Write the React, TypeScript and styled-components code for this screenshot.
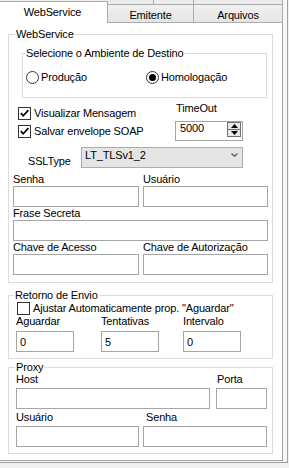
import React from "react";
import styled, { createGlobalStyle } from "styled-components";

const GlobalStyle = createGlobalStyle`
  * { box-sizing: border-box; }
  html, body { margin: 0; padding: 0; background: #f0f0f0; }
  body {
    font-family: "Liberation Sans", Arial, sans-serif;
    font-size: 11px;
    line-height: 13px;
    letter-spacing: -0.15px;
    color: #000;
  }
`;

const Frame = styled.div`
  width: 288px;
  padding-bottom: 1px;
  background: #f7f7f7;
  border-right: 1px solid #a0a0a0;
  border-bottom: 1px solid #a0a0a0;
`;

const TabStrip = styled.div`
  display: grid;
  width: 283px;
  grid-template-columns: 108px 46px 40px 89px;
  grid-template-rows: 4px 19px;
  background: #f0f0f0;
`;

const UpperTab = styled.div<{ $col: number }>`
  grid-row: 1;
  grid-column: ${(p) => p.$col};
  border-right: 1px solid #acacac;
  background: #ebebeb;
`;

const Tab = styled.div<{ $col: string }>`
  grid-row: 2;
  grid-column: ${(p) => p.$col};
  display: flex;
  justify-content: center;
  padding-top: 3px;
  line-height: 14px;
  border-top: 1px solid #acacac;
  border-right: 1px solid #acacac;
  border-bottom: 1px solid #acacac;
  background: linear-gradient(#f0f0f0, #e5e5e5);
`;

const ActiveTab = styled.div`
  grid-row: 1 / 3;
  grid-column: 1;
  margin-top: 1px;
  display: flex;
  justify-content: center;
  padding: 4px 2px 0 0;
  background: #fff;
  border-top: 1px solid #acacac;
  border-right: 1px solid #acacac;
`;

const Panel = styled.div`
  width: 283px;
  background: #fff;
  border-right: 1px solid #a0a0a0;
  border-bottom: 1px solid #a0a0a0;
  padding: 5px 9px 6px 8px;
  display: flex;
  flex-direction: column;
`;

const Group = styled.fieldset<{ $margin?: string }>`
  margin: ${(p) => p.$margin ?? "0"};
  padding: 0;
  min-width: 0;
  border: 1px solid #dcdcdc;
`;

const Legend = styled.legend<{ $ml: number }>`
  margin-left: ${(p) => p.$ml}px;
  padding: 0 1px;
  line-height: 12px;
  white-space: nowrap;
`;

const GroupBody = styled.div<{ $pad: string }>`
  padding: ${(p) => p.$pad};
  display: flex;
  flex-direction: column;
`;

const RadioRow = styled.div`
  display: grid;
  grid-template-columns: 120px auto;
`;

const RadioItem = styled.label`
  display: flex;
  align-items: center;
  gap: 2px;
  height: 13px;
  white-space: nowrap;
`;

const RadioCircle = styled.span<{ $checked: boolean }>`
  width: 13px;
  height: 13px;
  border-radius: 50%;
  border: 1px solid #333;
  background: #fff;
  display: flex;
  align-items: center;
  justify-content: center;
  &::after {
    content: "";
    width: 7px;
    height: 7px;
    border-radius: 50%;
    background: ${(p) => (p.$checked ? "#000" : "transparent")};
  }
`;

const CheckItem = styled.label<{ $indent?: number }>`
  display: flex;
  align-items: center;
  gap: 3px;
  height: 13px;
  margin-left: ${(p) => p.$indent ?? 0}px;
  white-space: nowrap;
`;

const CheckSquare = styled.span`
  width: 13px;
  height: 13px;
  border: 1px solid #333;
  background: #fff;
  display: flex;
  align-items: center;
  justify-content: center;
`;

const OptionsArea = styled.div`
  display: grid;
  grid-template-columns: 162px auto;
  margin-top: 4px;
`;

const CheckColumn = styled.div`
  display: flex;
  flex-direction: column;
  gap: 5px;
  padding: 5px 0 0 5px;
`;

const TimeoutColumn = styled.div`
  display: flex;
  flex-direction: column;
  gap: 6px;
`;

const TimeoutLabel = styled.span`
  padding-left: 1px;
`;

const Spin = styled.div`
  width: 68px;
  height: 20px;
  border: 1px solid #a5a5a5;
  display: flex;
  justify-content: space-between;
  align-items: flex-start;
  padding: 0 1px 0 4px;
`;

const SpinButtons = styled.div`
  display: flex;
  flex-direction: column;
  width: 14px;
  height: 15px;
  border: 1px solid #707070;
  background: #e8e8e8;
`;

const SpinHalf = styled.div<{ $down?: boolean }>`
  flex: 1;
  display: flex;
  align-items: center;
  justify-content: center;
  border-top: ${(p) => (p.$down ? "1px solid #707070" : "none")};
`;

const SslRow = styled.div`
  display: flex;
  align-items: flex-end;
  margin-top: 6px;
  padding-left: 15px;
`;

const SslLabel = styled.span`
  width: 53px;
`;

const Combo = styled.div`
  width: 162px;
  height: 21px;
  border: 1px solid #acacac;
  background: #e5e5e5;
  display: flex;
  justify-content: space-between;
  align-items: flex-start;
  padding: 1px 4px 0 3px;
`;

const Chevron = styled.svg`
  margin-top: 4px;
`;

const FieldGrid = styled.div<{ $cols: string; $gap?: number; $mt?: number }>`
  display: grid;
  grid-template-columns: ${(p) => p.$cols};
  column-gap: ${(p) => p.$gap ?? 4}px;
  margin-top: ${(p) => p.$mt ?? 0}px;
`;

const Field = styled.div<{ $span?: boolean }>`
  display: flex;
  flex-direction: column;
  min-width: 0;
  grid-column: ${(p) => (p.$span ? "1 / -1" : "auto")};
`;

const FieldLabel = styled.span<{ $ml?: number }>`
  margin-left: ${(p) => p.$ml ?? 0}px;
  white-space: nowrap;
`;

const TextBox = styled.input<{ $mt?: number; $w?: number }>`
  display: block;
  width: ${(p) => (p.$w ? `${p.$w}px` : "100%")};
  height: 21px;
  margin: ${(p) => p.$mt ?? 0}px 0 0 0;
  padding: 0 3px;
  border: 1px solid #a5a5a5;
  background: #fff;
  font: inherit;
  letter-spacing: inherit;
  color: #000;
  outline: none;
`;

const Radio = ({ checked, label }: { checked: boolean; label: string }) => (
  <RadioItem>
    <RadioCircle $checked={checked} />
    <span>{label}</span>
  </RadioItem>
);

const Check = ({ checked, label, indent }: { checked: boolean; label: string; indent?: number }) => (
  <CheckItem $indent={indent}>
    <CheckSquare>
      {checked && (
        <svg width="11" height="11" viewBox="0 0 11 11">
          <path d="M1.8 5.2 L4.2 7.8 L9.4 2.2" stroke="#000" strokeWidth="1.7" fill="none" />
        </svg>
      )}
    </CheckSquare>
    <span>{label}</span>
  </CheckItem>
);

const LabeledBox = ({
  label,
  value,
  span,
  gap,
  width,
  labelOffset,
}: {
  label: string;
  value?: string;
  span?: boolean;
  gap?: number;
  width?: number;
  labelOffset?: number;
}) => (
  <Field $span={span}>
    <FieldLabel $ml={labelOffset}>{label}</FieldLabel>
    <TextBox $mt={gap} $w={width} readOnly defaultValue={value ?? ""} />
  </Field>
);

export default function App() {
  return (
    <>
      <GlobalStyle />
      <Frame>
        <TabStrip>
          <UpperTab $col={2} />
          <UpperTab $col={3} />
          <UpperTab $col={4} />
          <ActiveTab>WebService</ActiveTab>
          <Tab $col="2 / 4">Emitente</Tab>
          <Tab $col="4">Arquivos</Tab>
        </TabStrip>
        <Panel>
          <Group>
            <Legend $ml={6}>WebService</Legend>
            <GroupBody $pad="0 4px 7px 4px">
              <Group $margin="7px 1px 0 9px">
                <Legend $ml={2}>Selecione o Ambiente de Destino</Legend>
                <GroupBody $pad="12px 0 13px 3px">
                  <RadioRow>
                    <Radio checked={false} label="Produção" />
                    <Radio checked={true} label="Homologação" />
                  </RadioRow>
                </GroupBody>
              </Group>

              <OptionsArea>
                <CheckColumn>
                  <Check checked label="Visualizar Mensagem" />
                  <Check checked label="Salvar envelope SOAP" />
                </CheckColumn>
                <TimeoutColumn>
                  <TimeoutLabel>TimeOut</TimeoutLabel>
                  <Spin>
                    <span>5000</span>
                    <SpinButtons>
                      <SpinHalf>
                        <svg width="7" height="4" viewBox="0 0 7 4">
                          <polygon points="0,4 7,4 3.5,0" fill="#000" />
                        </svg>
                      </SpinHalf>
                      <SpinHalf $down>
                        <svg width="7" height="4" viewBox="0 0 7 4">
                          <polygon points="0,0 7,0 3.5,4" fill="#000" />
                        </svg>
                      </SpinHalf>
                    </SpinButtons>
                  </Spin>
                </TimeoutColumn>
              </OptionsArea>

              <SslRow>
                <SslLabel>SSLType</SslLabel>
                <Combo>
                  <span>LT_TLSv1_2</span>
                  <Chevron width="7" height="4" viewBox="0 0 7 4">
                    <polyline points="0.5,0.5 3.5,3.3 6.5,0.5" stroke="#606060" strokeWidth="1.3" fill="none" />
                  </Chevron>
                </Combo>
              </SslRow>

              <FieldGrid $cols="126px 125px" $mt={5}>
                <LabeledBox label="Senha" />
                <LabeledBox label="Usuário" />
                <LabeledBox label="Frase Secreta" span />
                <LabeledBox label="Chave de Acesso" />
                <LabeledBox label="Chave de Autorização" />
              </FieldGrid>
            </GroupBody>
          </Group>

          <Group $margin="6px 0 0 0">
            <Legend $ml={5}>Retorno de Envio</Legend>
            <GroupBody $pad="1px 5px 6px 7px">
              <Check checked={false} indent={1} label={'Ajustar Automaticamente prop. "Aguardar"'} />
              <FieldGrid $cols="85px 82px 58px" $gap={0}>
                <LabeledBox label="Aguardar" value="0" gap={3} width={58} />
                <LabeledBox label="Tentativas" value="5" gap={3} width={58} />
                <LabeledBox label="Intervalo" value="0" gap={3} width={58} />
              </FieldGrid>
            </GroupBody>
          </Group>

          <Group $margin="2px 0 0 0">
            <Legend $ml={6}>Proxy</Legend>
            <GroupBody $pad="0 5px 6px 7px">
              <FieldGrid $cols="194px 51px" $gap={6}>
                <LabeledBox label="Host" gap={2} />
                <LabeledBox label="Porta" gap={2} labelOffset={1} />
              </FieldGrid>
              <FieldGrid $cols="123px 124px" $gap={4} $mt={2}>
                <LabeledBox label="Usuário" gap={2} />
                <LabeledBox label="Senha" gap={2} labelOffset={3} />
              </FieldGrid>
            </GroupBody>
          </Group>
        </Panel>
      </Frame>
    </>
  );
}
